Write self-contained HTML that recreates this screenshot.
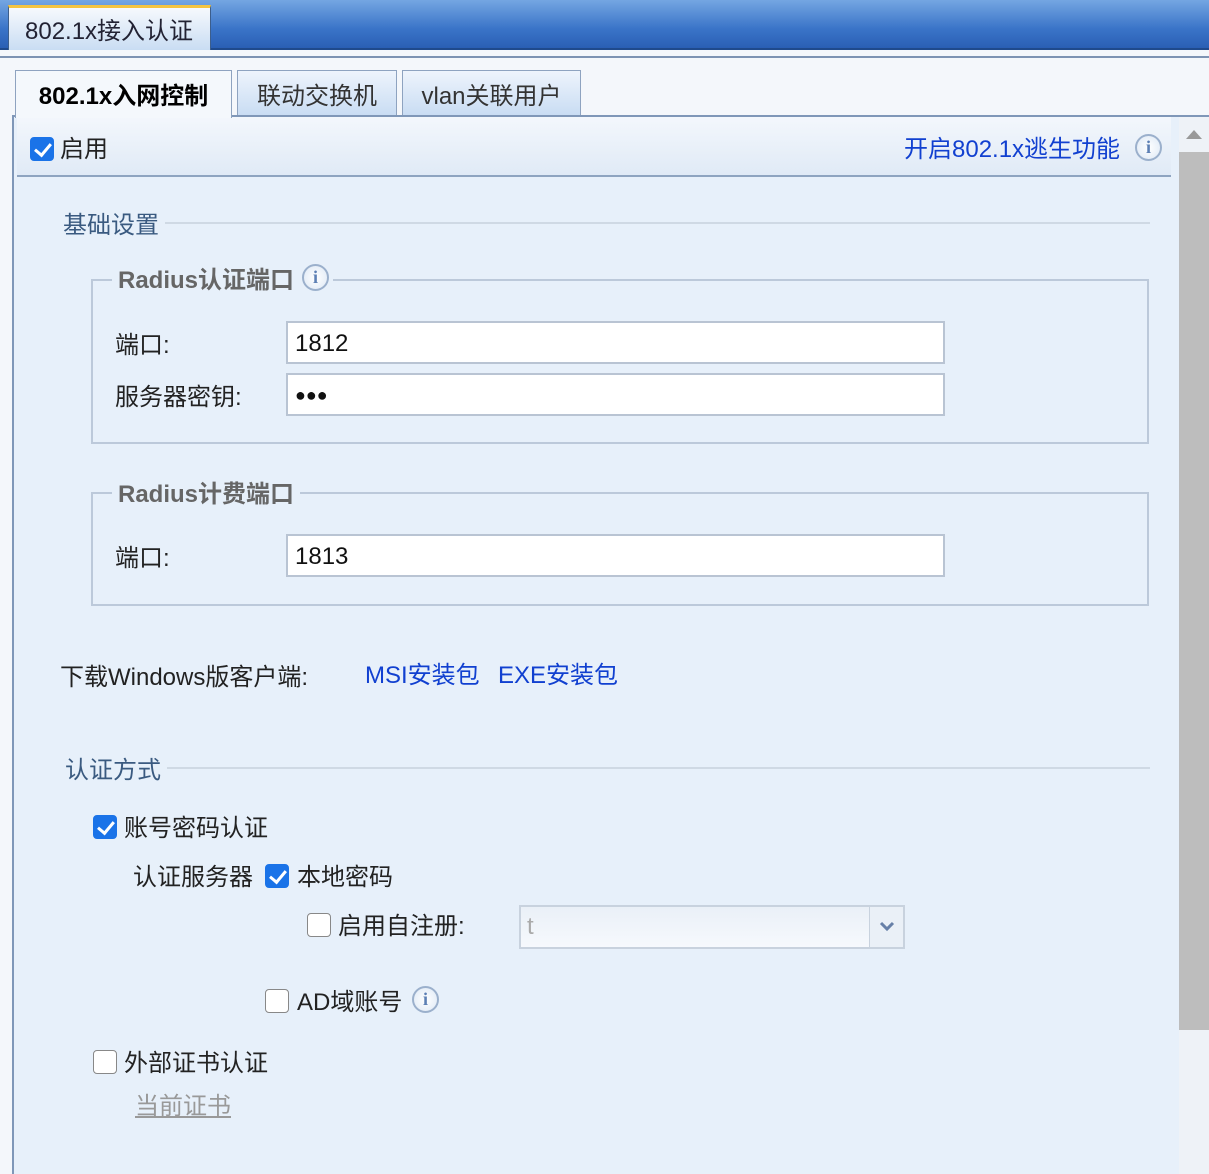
<!DOCTYPE html>
<html><head><meta charset="utf-8"><style>
*{margin:0;padding:0;box-sizing:border-box}
body{width:1209px;height:1174px;overflow:hidden;background:#f4f7fb;font-family:"Liberation Sans","Noto Sans CJK SC",sans-serif;font-size:24px;color:#222;position:relative}
.a{position:absolute;white-space:nowrap}
.top{left:0;top:0;width:1209px;height:50px;background:linear-gradient(#74a6e2,#3a74c8 60%,#2a5fb4);border-bottom:2px solid #1f4a8c}
.t0{left:8px;top:5px;width:203px;height:45px;background:linear-gradient(#f6f9fd,#c9ddf3);border:1px solid #3c5e8c;border-bottom:none;border-top:3px solid #f4c440;padding:3px 0 0 16px;color:#223}
.st{top:70px;height:46px;border:1px solid #8ea3c0;border-bottom:none;background:linear-gradient(#eef4fc,#c8dcf3);text-align:center;padding-top:5px;color:#333}
.panel{left:12px;top:115px;width:1197px;height:1059px;background:#e7f0fa;border-left:2px solid #7f97b8;border-top:2px solid #7f97b8}
.hdr{left:17px;top:117px;width:1154px;height:60px;background:linear-gradient(#f3f7fc,#e0eaf6);border-bottom:2px solid #8ea4c0}
.cb{width:24px;height:24px;border-radius:4px;border:1px solid #888;background:#fff}
.cb.on{background:#1a73e8;border-color:#1a73e8}
.cb.on::after{content:"";position:absolute;left:7px;top:2px;width:7px;height:13px;border:solid #fff;border-width:0 3px 3px 0;transform:rotate(40deg)}
.line{height:2px;background:#cfd9e4}
.fs{border:2px solid #bcc9da}
.leg{font-weight:bold;color:#666;background:#e7f0fa;padding:0 6px}
.inp{left:286px;width:659px;height:43px;background:#fff;border:2px solid #b9c4d3;padding:7px 0 0 7px;color:#111}
.lnk{color:#1140d0}
.info{width:27px;height:27px;border-radius:50%;border:2px solid #9bb0cc;background:radial-gradient(#fff,#dde8f5);color:#5c7fb4;font:bold 18px "Liberation Serif",serif;text-align:center;line-height:23px}
</style></head><body>
<div class="a top"></div>
<div class="a t0">802.1x接入认证</div>
<div class="a" style="left:0;top:56px;width:1209px;height:2px;background:#7d93b3"></div>
<div class="a st" style="left:15px;width:217px;background:#f4f8fc;font-weight:bold;color:#000;height:48px;z-index:2">802.1x入网控制</div>
<div class="a st" style="left:237px;width:160px">联动交换机</div>
<div class="a st" style="left:402px;width:179px">vlan关联用户</div>
<div class="a panel"></div>
<div class="a hdr"></div>
<div class="a cb on" style="left:30px;top:137px"></div>
<div class="a" style="left:60px;top:129px">启用</div>
<div class="a lnk" style="left:904px;top:129px">开启802.1x逃生功能</div>
<div class="a info" style="left:1135px;top:134px">i</div>
<div class="a" style="left:1179px;top:117px;width:30px;height:1057px;background:#eef2f7"></div>
<div class="a" style="left:1186px;top:130px;width:0;height:0;border:8px solid transparent;border-bottom:9px solid #999;border-top:none"></div>
<div class="a" style="left:1179px;top:152px;width:30px;height:878px;background:#bdbdbd"></div>

<div class="a" style="left:63px;top:205px;color:#3a5a80">基础设置</div>
<div class="a line" style="left:165px;top:222px;width:985px"></div>
<div class="a fs" style="left:91px;top:279px;width:1058px;height:165px"></div>
<div class="a leg" style="left:112px;top:260px">Radius认证端口 <span style="display:inline-block;width:26px"></span></div>
<div class="a info" style="left:302px;top:264px">i</div>
<div class="a" style="left:115px;top:325px">端口:</div>
<div class="a inp" style="top:321px">1812</div>
<div class="a" style="left:115px;top:377px">服务器密钥:</div>
<div class="a inp" style="top:373px;font-size:18px;padding-top:10px">●●●</div>

<div class="a fs" style="left:91px;top:492px;width:1058px;height:114px"></div>
<div class="a leg" style="left:112px;top:474px">Radius计费端口</div>
<div class="a" style="left:115px;top:538px">端口:</div>
<div class="a inp" style="top:534px">1813</div>

<div class="a" style="left:60px;top:657px">下载Windows版客户端:</div>
<div class="a lnk" style="left:365px;top:655px">MSI安装包</div>
<div class="a lnk" style="left:498px;top:655px">EXE安装包</div>

<div class="a" style="left:65px;top:750px;color:#3a5a80">认证方式</div>
<div class="a line" style="left:167px;top:767px;width:983px"></div>
<div class="a cb on" style="left:93px;top:815px"></div>
<div class="a" style="left:124px;top:808px">账号密码认证</div>
<div class="a" style="left:133px;top:857px">认证服务器</div>
<div class="a cb on" style="left:265px;top:864px"></div>
<div class="a" style="left:297px;top:857px">本地密码</div>
<div class="a cb" style="left:307px;top:913px"></div>
<div class="a" style="left:338px;top:906px">启用自注册:</div>
<div class="a" style="left:519px;top:905px;width:386px;height:44px;background:linear-gradient(#eaf0f7,#f6f9fd);border:2px solid #c8d2de;color:#aaa;padding:6px 0 0 6px">t</div>
<div class="a" style="left:869px;top:907px;width:34px;height:40px;border-left:1px solid #c8d2de;background:#eaf0f7"><svg width="34" height="40"><path d="M11 16l6 6 6-6" fill="none" stroke="#6780a8" stroke-width="3"/></svg></div>
<div class="a cb" style="left:265px;top:989px"></div>
<div class="a" style="left:297px;top:982px">AD域账号</div>
<div class="a info" style="left:412px;top:986px">i</div>
<div class="a cb" style="left:93px;top:1050px"></div>
<div class="a" style="left:124px;top:1043px">外部证书认证</div>
<div class="a" style="left:135px;top:1086px;color:#999;text-decoration:underline">当前证书</div>
</body></html>
